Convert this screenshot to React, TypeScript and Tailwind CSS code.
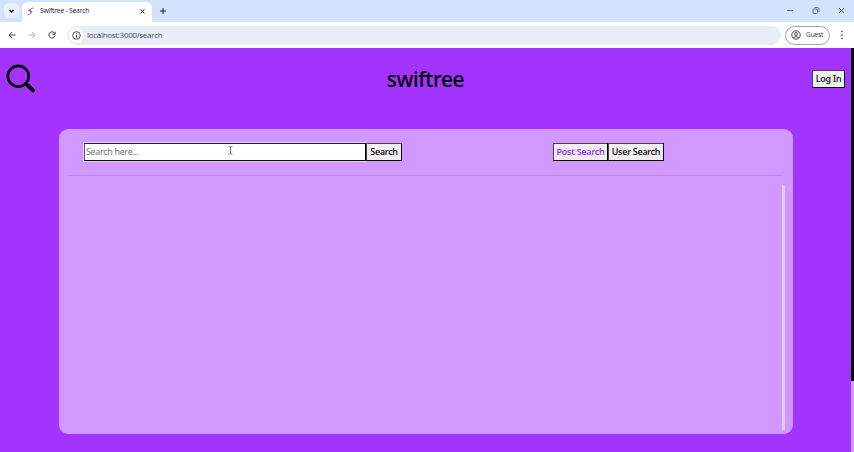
import type { ReactNode } from "react";

function TabStrip() {
  return (
    <div className="flex h-[22px] items-start bg-[#d3e3fd] text-[#1f2329]">
      <div className="ml-1 mt-[3px] flex h-[15px] w-[15px] items-center justify-center rounded-[5px] bg-[#e9f1fe]">
        <svg width="5" height="4" viewBox="0 0 5 4" fill="none" stroke="currentColor" strokeWidth="1.3">
          <path d="M.5 1l2 2 2-2" />
        </svg>
      </div>
      <div className="ml-[3px] mt-[2px] flex h-[20px] w-[130px] items-center rounded-t-[6px] bg-white pb-[2px] pl-[4px] pr-[7px]">
        <svg width="9" height="9" viewBox="0 0 9 9" fill="none">
          <path d="M7.6 1Q4.2 1.2 4.1 3.2L5.4 5Q5.2 7.2 1.4 8" stroke="#6b5877" strokeWidth=".8" />
          <path d="M2.2 3.2h2.4M4 4.2l2 1.2" stroke="#a23bed" strokeWidth="1.4" />
        </svg>
        <span className="ml-[5px] whitespace-nowrap font-['Open_Sans',sans-serif] text-[6.8px] tracking-[-0.23px]">Swiftree - Search</span>
        <svg className="ml-auto" width="5" height="5" viewBox="0 0 5 5" stroke="currentColor" strokeWidth="1">
          <path d="M.5.5l4 4m0-4l-4 4" />
        </svg>
      </div>
      <svg className="ml-[8px] mt-[8px]" width="6" height="6" viewBox="0 0 6 6" stroke="currentColor" strokeWidth="1">
        <path d="M3 0v6M0 3h6" />
      </svg>
      <div className="ml-auto mr-[9px] mt-[7px] flex gap-[18px]">
        <svg width="8" height="7" viewBox="0 0 8 7" stroke="#444b55" strokeWidth=".8">
          <path d="M1 3.5h6" />
        </svg>
        <svg width="8" height="7" viewBox="0 0 8 7" fill="none" stroke="#444b55" strokeWidth=".8">
          <rect x="1" y="2" width="4.5" height="4.5" rx="1" />
          <path d="M2.5.5h3q1.5 0 1.5 1.5v3" />
        </svg>
        <svg width="7" height="7" viewBox="0 0 7 7" stroke="#444b55" strokeWidth=".9">
          <path d="M1 1l5 5m0-5L1 6" />
        </svg>
      </div>
    </div>
  );
}

function Toolbar() {
  return (
    <div className="flex h-[26px] items-center bg-white pl-[8px] pr-[9px] text-[#30343a]">
      <svg width="8" height="8" viewBox="0 0 8 8" fill="none" stroke="currentColor" strokeWidth=".9">
        <path d="M7.5 4H1m3-3L1 4l3 3" />
      </svg>
      <svg className="ml-[12px]" width="8" height="8" viewBox="0 0 8 8" fill="none" stroke="#a4a7ab" strokeWidth=".9">
        <path d="M.5 4H7M4 1l3 3-3 3" />
      </svg>
      <svg className="ml-[12px]" width="8" height="8" viewBox="0 0 8 8" fill="none" stroke="currentColor" strokeWidth="1">
        <path d="M6.7 2.4A3.1 3.1 0 1 0 7 4.7M7 .7v2.5H4.5" />
      </svg>
      <div className="ml-[11px] flex h-[19px] w-[714px] items-center rounded-full bg-[#e9eef6] pl-[2px]">
        <span className="flex h-[15px] w-[15px] items-center justify-center rounded-full bg-white">
          <svg width="9" height="9" viewBox="0 0 9 9" fill="none" stroke="currentColor" strokeWidth=".9">
            <circle cx="4.5" cy="4.5" r="3.8" />
            <path d="M4.5 4v2.7M4.5 2.2v1" />
          </svg>
        </span>
        <span className="ml-[3px] font-['Open_Sans',sans-serif] text-[8px] tracking-[-0.3px] text-[#465263]">localhost:3000/search</span>
      </div>
      <div className="ml-[4px] flex h-[19px] w-[45px] items-center rounded-full border border-[#9fa3a9] pl-[5px]">
        <svg width="10" height="10" viewBox="0 0 10 10" fill="none" stroke="currentColor" strokeWidth=".9">
          <circle cx="5" cy="5" r="4.2" />
          <circle cx="5" cy="4" r="1.5" />
          <path d="M2.2 7.7Q5 5.3 7.8 7.7" />
        </svg>
        <span className="ml-[5px] font-['Open_Sans',sans-serif] text-[6.6px] tracking-[-0.15px]">Guest</span>
      </div>
      <svg className="ml-auto mr-[1px]" width="4" height="10" viewBox="0 0 4 10" fill="currentColor">
        <circle cx="2" cy="1.5" r=".8" />
        <circle cx="2" cy="5" r=".8" />
        <circle cx="2" cy="8.5" r=".8" />
      </svg>
    </div>
  );
}

function Button({ children, className = "" }: { children: ReactNode; className?: string }) {
  return (
    <button
      className={`flex h-[18px] shrink-0 items-center justify-center whitespace-nowrap border border-t-[#444] border-l-[#444] border-r-black border-b-black bg-[#efefef] pb-[1px] text-[9px] tracking-[-0.25px] ${className}`}
    >
      {children}
    </button>
  );
}

export default function App() {
  return (
    <div className="flex h-[452px] w-[854px] flex-col overflow-hidden bg-[#a333ff] font-['Noto_Sans',sans-serif] leading-none text-black">
      <TabStrip />
      <Toolbar />
      <div className="flex min-h-0 flex-1">
        <main className="min-w-0 flex-1">
          <header className="grid h-[81px] grid-cols-[1fr_auto_1fr] items-start pl-[6px] pr-[6px]">
            <svg className="mt-[16px]" width="30" height="30" viewBox="0 0 30 30" fill="none" stroke="black" strokeLinecap="round">
              <circle cx="12.3" cy="12.2" r="10.4" strokeWidth="2.7" />
              <path d="M20 20l1.5 1.5" strokeWidth="2.7" />
              <path d="M21.7 21.4l5.4 5" strokeWidth="4" />
            </svg>
            <h1 className="mt-[20px] whitespace-nowrap text-[21px] font-medium leading-[22px] tracking-[-0.45px]">swiftree</h1>
            <Button className="mt-[22px] h-[17px] w-[33px] justify-self-end font-medium">Log In</Button>
          </header>
          <section className="ml-[58.5px] flex h-[305px] w-[734px] flex-col rounded-[9px] bg-[#d199ff]">
            <div className="mr-[10px] ml-[9.5px] flex h-[47px] border-b border-[#bd8ae6] pl-[16px] pt-[14px]">
              <input
                aria-label="Search"
                placeholder="Search here..."
                className="h-[18px] w-[282px] border border-black border-t-[#222] border-l-[#555] bg-white px-[1px] pb-[2px] text-[9px] tracking-[-0.33px] outline-[0.5px] outline-white/50 placeholder:text-[#757575]"
              />
              <Button className="w-[36px] font-medium">Search</Button>
              <div className="ml-[151px] flex">
                <Button className="w-[55px] font-semibold tracking-[-0.5px] text-[#a333ff]">Post Search</Button>
                <Button className="w-[56px] font-medium tracking-[-0.4px]">User Search</Button>
              </div>
            </div>
            <div className="mr-[8px] mt-[9px] flex h-[245px] justify-end">
              <div className="w-[3px] rounded-full bg-[#e6c8ff]" />
            </div>
          </section>
        </main>
        <div className="w-[3px] bg-[#d199ff]">
          <div className="h-[333px] bg-black" />
        </div>
      </div>
      <svg className="absolute left-[228px] top-[146px]" width="5" height="9" viewBox="0 0 5 9" fill="none" stroke="#555" strokeWidth=".8">
        <path d="M.5.5h1l1 .5 1-.5h1M2.5 1v6.5M.5 8h1l1-.5 1 .5h1" />
      </svg>
    </div>
  );
}
